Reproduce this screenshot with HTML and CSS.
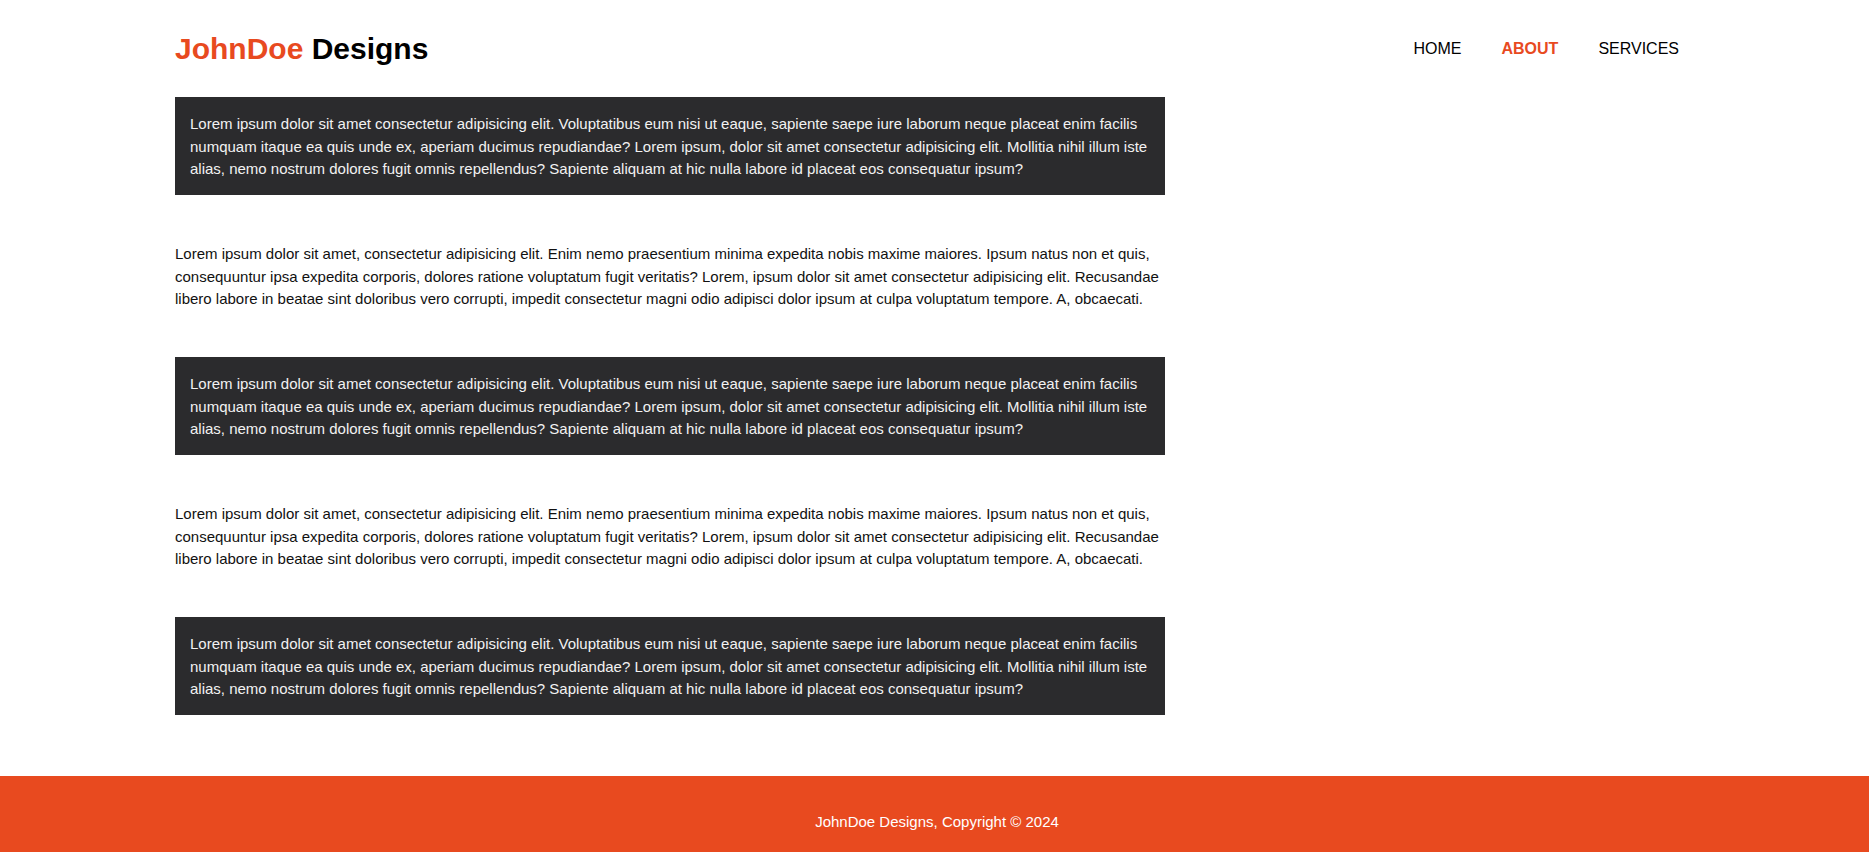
FILE: index.html
```html
<!DOCTYPE html>
<html lang="en">
<head>
<meta charset="utf-8">
<title>JohnDoe Designs</title>
<link rel="stylesheet" href="styles.css">
</head>
<body>
<header class="site-header">
  <div class="container header-inner">
    <h1 class="logo"><span class="logo-accent">JohnDoe</span> Designs</h1>
    <nav class="nav">
      <a class="nav-link" href="#">HOME</a>
      <a class="nav-link nav-link-active" href="#">ABOUT</a>
      <a class="nav-link" href="#">SERVICES</a>
    </nav>
  </div>
</header>
<main class="container main">
  <p class="block block-dark">Lorem ipsum dolor sit amet consectetur adipisicing elit. Voluptatibus eum nisi ut eaque, sapiente saepe iure laborum neque placeat enim facilis numquam itaque ea quis unde ex, aperiam ducimus repudiandae? Lorem ipsum, dolor sit amet consectetur adipisicing elit. Mollitia nihil illum iste alias, nemo nostrum dolores fugit omnis repellendus? Sapiente aliquam at hic nulla labore id placeat eos consequatur ipsum?</p>
  <p class="block block-plain">Lorem ipsum dolor sit amet, consectetur adipisicing elit. Enim nemo praesentium minima expedita nobis maxime maiores. Ipsum natus non et quis, consequuntur ipsa expedita corporis, dolores ratione voluptatum fugit veritatis? Lorem, ipsum dolor sit amet consectetur adipisicing elit. Recusandae libero labore in beatae sint doloribus vero corrupti, impedit consectetur magni odio adipisci dolor ipsum at culpa voluptatum tempore. A, obcaecati.</p>
  <p class="block block-dark">Lorem ipsum dolor sit amet consectetur adipisicing elit. Voluptatibus eum nisi ut eaque, sapiente saepe iure laborum neque placeat enim facilis numquam itaque ea quis unde ex, aperiam ducimus repudiandae? Lorem ipsum, dolor sit amet consectetur adipisicing elit. Mollitia nihil illum iste alias, nemo nostrum dolores fugit omnis repellendus? Sapiente aliquam at hic nulla labore id placeat eos consequatur ipsum?</p>
  <p class="block block-plain">Lorem ipsum dolor sit amet, consectetur adipisicing elit. Enim nemo praesentium minima expedita nobis maxime maiores. Ipsum natus non et quis, consequuntur ipsa expedita corporis, dolores ratione voluptatum fugit veritatis? Lorem, ipsum dolor sit amet consectetur adipisicing elit. Recusandae libero labore in beatae sint doloribus vero corrupti, impedit consectetur magni odio adipisci dolor ipsum at culpa voluptatum tempore. A, obcaecati.</p>
  <p class="block block-dark">Lorem ipsum dolor sit amet consectetur adipisicing elit. Voluptatibus eum nisi ut eaque, sapiente saepe iure laborum neque placeat enim facilis numquam itaque ea quis unde ex, aperiam ducimus repudiandae? Lorem ipsum, dolor sit amet consectetur adipisicing elit. Mollitia nihil illum iste alias, nemo nostrum dolores fugit omnis repellendus? Sapiente aliquam at hic nulla labore id placeat eos consequatur ipsum?</p>
</main>
<footer class="site-footer">
  <p class="footer-text">JohnDoe Designs, Copyright &copy; 2024</p>
</footer>
</body>
</html>
```
FILE: styles.css
```css
* {
  box-sizing: border-box;
}

html, body {
  margin: 0;
  padding: 0;
}

body {
  font-family: "Liberation Sans", Arial, sans-serif;
  font-size: 15px;
  line-height: 1.5;
  color: #111;
  background: #fff;
}

.container {
  max-width: 1519px;
  margin: 0 auto;
}

.site-header {
  padding: 31px 0;
}

.header-inner {
  display: flex;
  align-items: center;
  justify-content: space-between;
}

.logo {
  margin: 0;
  font-size: 30px;
  line-height: 35px;
  font-weight: 700;
  color: #000;
}

.logo-accent {
  color: #e84a1f;
}

.nav {
  display: flex;
  gap: 40px;
  padding-right: 15px;
}

.nav-link {
  font-size: 16px;
  line-height: 20px;
  color: #000;
  text-decoration: none;
}

.nav-link-active {
  color: #e84a1f;
  font-weight: 700;
}

.main {
  display: flex;
  flex-direction: column;
  gap: 47.5px;
  padding-bottom: 61px;
}

.block {
  width: 990px;
  margin: 0;
}

.block-dark {
  background: #2b2b2d;
  color: #f2f2f2;
  padding: 16px 15px 14px;
}

.block-plain {
  color: #111;
  padding-top: 1px;
  margin-bottom: -1px;
}

.site-footer {
  background: #e84a1f;
  height: 77px;
  padding: 35px 0 0 5px;
  text-align: center;
}

.footer-text {
  margin: 0;
  color: #fff;
  font-size: 15px;
  line-height: 22.5px;
}
```
